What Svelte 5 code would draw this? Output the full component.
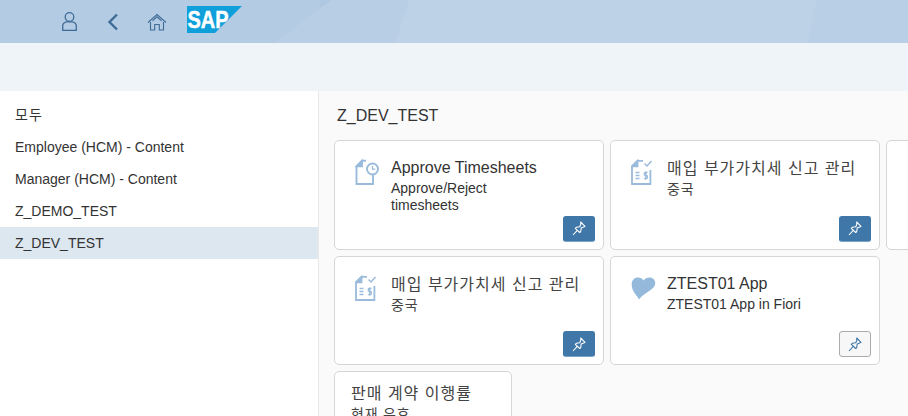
<script>
	const groups = ["모두", "Employee (HCM) - Content", "Manager (HCM) - Content", "Z_DEMO_TEST", "Z_DEV_TEST"];
	const selected = "Z_DEV_TEST";

	const tiles = [
		{ title: "Approve Timesheets", sub: ["Approve/Reject", "timesheets"], icon: "sheet", pinned: true },
		{ title: "매입 부가가치세 신고 관리", sub: ["중국"], icon: "tax", pinned: true },
		{ title: "", sub: [], icon: "", pinned: false, stub: true },
		{ title: "매입 부가가치세 신고 관리", sub: ["중국"], icon: "tax", pinned: true },
		{ title: "ZTEST01 App", sub: ["ZTEST01 App in Fiori"], icon: "heart", pinned: false },
		{ title: "판매 계약 이행률", sub: ["현재 유효"], icon: "", pinned: false, small: true }
	];

	const isKorean = (text) => /[가-힣]/.test(text);
</script>

<div class="shell">
	<header class="topbar">
		<svg class="backdrop" viewBox="0 0 908 43" preserveAspectRatio="none" aria-hidden="true">
			<polygon points="274,43 331,0 409,0 395,43" fill="#b8cee5" />
			<polygon points="395,43 409,0 817,0 808,43" fill="#bdd2e7" />
			<polygon points="808,43 817,0 908,0 908,43" fill="#b9cfe5" />
			<polygon points="320,0 331,0 320,8" fill="#afc8e2" />
		</svg>
		<button class="head-btn" aria-label="사용자">
			<svg width="15" height="19" viewBox="0 0 15 19" fill="none" stroke="#3f6c97" stroke-width="1.3">
				<circle cx="7.500" cy="5" r="4.300" />
				<path d="M4.500 9.800h6c2.500.5 3.800 2 3.800 4.200v4.300H.7V14c0-2.200 1.300-3.700 3.800-4.200z" />
			</svg>
		</button>
		<button class="head-btn" aria-label="뒤로">
			<svg width="12" height="18" viewBox="0 0 12 18" fill="none" stroke="#3f6c97" stroke-width="2.400">
				<path d="M10 1.500 2.500 9l7.500 7.500" />
			</svg>
		</button>
		<button class="head-btn" aria-label="홈">
			<svg width="20" height="18" viewBox="0 0 20 18" fill="none" stroke="#3f6c97" stroke-width="1.100">
				<path d="M1 9.500 10 1.500l9 8" />
				<path d="M3.500 9v8h4.200v-5.500h4.600V17h4.200V9" />
				<path d="M5.500 7.800 10 3.800l4.500 4" />
			</svg>
		</button>
		<svg class="logo" width="55" height="27" viewBox="0 0 55 27" role="img" aria-label="SAP">
			<polygon points="0,0 55,0 28,27 0,27" fill="#0fa0dc" />
			<text x="0.500" y="22" class="logo-text" textLength="41" lengthAdjust="spacingAndGlyphs">SAP</text>
		</svg>
	</header>

	<div class="subbar"></div>

	<div class="body">
		<nav class="side">
			{#each groups as group}
				<div class="side-item" class:active={group === selected} class:ko={isKorean(group)}>{group}</div>
			{/each}
		</nav>

		<main class="content">
			<h2>Z_DEV_TEST</h2>
			<div class="tiles">
				{#each tiles as tile}
					<article class="tile" class:stub={tile.stub} class:small={tile.small}>
						{#if tile.icon}
							<div class="tile-icon">
								{#if tile.icon === "sheet"}
									<svg width="26" height="26" viewBox="0 0 26 26" fill="none" stroke="#9abbdb" stroke-width="1.900">
										<path d="M11 1.800H7L1.500 7.300V25H18v-9" />
										<path d="M7 1.800v5.500H1.500L7 1.800z" fill="#9abbdb" />
										<circle cx="17.500" cy="10" r="5.500" fill="#fff" />
										<path d="M17.500 7v3.200h2.700" stroke-width="1.300" />
									</svg>
								{:else if tile.icon === "tax"}
									<svg width="22" height="26" viewBox="0 0 22 26" fill="none" stroke="#9abbdb" stroke-width="1.800">
										<path d="M12 1.800H6.500L1 7.300V25h18.400V11" />
										<path d="M6.500 1.800v5.500H1l5.500-5.500z" fill="#9abbdb" />
										<path d="M13.500 4.500l2.500 2.500 4.500-5" stroke-width="1.500" />
										<path d="M4.500 13.500h4M4.500 16.500h4M4.500 19.500h4" stroke-width="1.500" />
										<path d="M16.500 13.500h-2.300q-1 0-1 1.500t1 1.500h1.300q1 0 1 1.500t-1 1.500h-2.300M14.800 12.300v8.400" stroke-width="1.300" />
									</svg>
								{:else if tile.icon === "heart"}
									<svg width="25" height="26" viewBox="0 -1.500 25 26">
										<path d="M8 23C6.500 19 1 16 .7 8.500.5 3.500 3.500 1 7 1c2.500 0 4.500 1 5.500 3 1.300-2 3.500-3 5.800-3 3.700 0 6.200 2.500 5.900 6.300C23.800 13.500 13 16 8 23z" fill="#94b9db" />
									</svg>
								{/if}
							</div>
						{/if}
						{#if tile.title}
							<div class="tile-text">
								<div class="tile-title" class:ko={isKorean(tile.title)}>{tile.title}</div>
								{#each tile.sub as line}
									<div class="tile-sub" class:ko={isKorean(line)}>{line}</div>
								{/each}
							</div>
						{/if}
						{#if !tile.stub && !tile.small}
							<button class="pin" class:on={tile.pinned} aria-label="고정">
								<svg width="14" height="15" viewBox="0 0 14 15" fill="none" stroke="currentColor" stroke-width="1.100">
									<path d="M8.700 1 13 5.300l-1.300.7-2.500 1 -.5 3.500-1 1L3.300 7.300l1-1 3.500-.5 1-2.500z" stroke-linejoin="round" />
									<path d="M5.300 9.300 1 14" />
								</svg>
							</button>
						{/if}
					</article>
				{/each}
			</div>
		</main>
	</div>
</div>

<style>
	:global(body) {
		overflow: hidden;
	}

	.shell {
		width: 908px;
		height: 416px;
		overflow: hidden;
		display: flex;
		flex-direction: column;
		font-family: "Liberation Sans", "Noto Sans CJK KR", sans-serif;
		color: #333;
	}

	.topbar {
		position: relative;
		flex: 0 0 43px;
		display: flex;
		align-items: center;
		padding-left: 56px;
		background: #b3cbe3;
	}

	.backdrop {
		position: absolute;
		inset: 0;
		width: 100%;
		height: 100%;
	}

	.head-btn {
		position: relative;
		width: 26px;
		height: 26px;
		margin-right: 18px;
		padding: 0;
		border: 0;
		background: none;
		display: flex;
		align-items: center;
		justify-content: center;
	}

	.logo {
		position: relative;
		margin-left: -1px;
		margin-top: -4px;
	}

	.logo-text {
		font-family: "Liberation Sans", sans-serif;
		font-weight: 700;
		font-size: 24px;
		fill: #fff;
		stroke: #fff;
		stroke-width: 0.5px;
	}

	.subbar {
		flex: 0 0 48px;
		background: #eff4f8;
	}

	.body {
		flex: 1;
		min-height: 0;
		display: flex;
	}

	.side {
		flex: 0 0 318px;
		padding-top: 8px;
		background: #fff;
		border-right: 1px solid #e8e8e8;
	}

	.side-item {
		height: 32px;
		padding-left: 15px;
		line-height: 32px;
		font-size: 14px;
		color: #333;
	}

	.side-item.ko {
		letter-spacing: 1px;
	}

	.side-item.active {
		background: #dde7f0;
	}

	.content {
		flex: 1;
		min-width: 0;
		padding: 15px 0 0 15px;
		background: #fafafa;
	}

	h2 {
		margin: 0 0 15px 3px;
		height: 19px;
		line-height: 19px;
		font-size: 16px;
		font-weight: 400;
		color: #333;
	}

	.tiles {
		display: grid;
		grid-template-columns: 270px 270px 270px;
		grid-auto-rows: 109.5px;
		gap: 6px;
		width: 900px;
	}

	.tile {
		position: relative;
		box-sizing: border-box;
		display: flex;
		padding: 16px 20px 0 20px;
		border: 1px solid #d6d6d6;
		border-radius: 5px;
		background: #fff;
	}

	.tile.small {
		grid-column: 1;
		width: 178px;
		padding-left: 16px;
		padding-top: 10px;
	}

	.tile-icon {
		flex: 0 0 36px;
		height: 30px;
		display: flex;
		align-items: flex-start;
		padding-top: 2px;
	}

	.tile-text {
		min-width: 0;
		flex: 1;
	}

	.tile-title {
		font-size: 16px;
		line-height: 22px;
		color: #333;
		white-space: nowrap;
	}

	.tile-title.ko {
		padding-top: 1px;
		letter-spacing: 1px;
		color: #444;
	}

	.tile-sub {
		font-size: 14px;
		line-height: 17px;
		color: #333;
		white-space: nowrap;
	}

	.tile-sub.ko {
		letter-spacing: 0.8px;
		color: #444;
	}

	.tile-title + .tile-sub {
		margin-top: 1px;
	}

	.pin {
		position: absolute;
		right: 8px;
		bottom: 7px;
		width: 32px;
		height: 26px;
		padding: 0;
		display: flex;
		align-items: center;
		justify-content: center;
		border: 1px solid #ababab;
		border-radius: 3px;
		background: #f7f7f7;
		color: #3f77a8;
	}

	.pin.on {
		border-color: #3f77a8;
		border-bottom-color: #7ba3c6;
		background: #3f77a8;
		color: #fff;
	}
</style>
